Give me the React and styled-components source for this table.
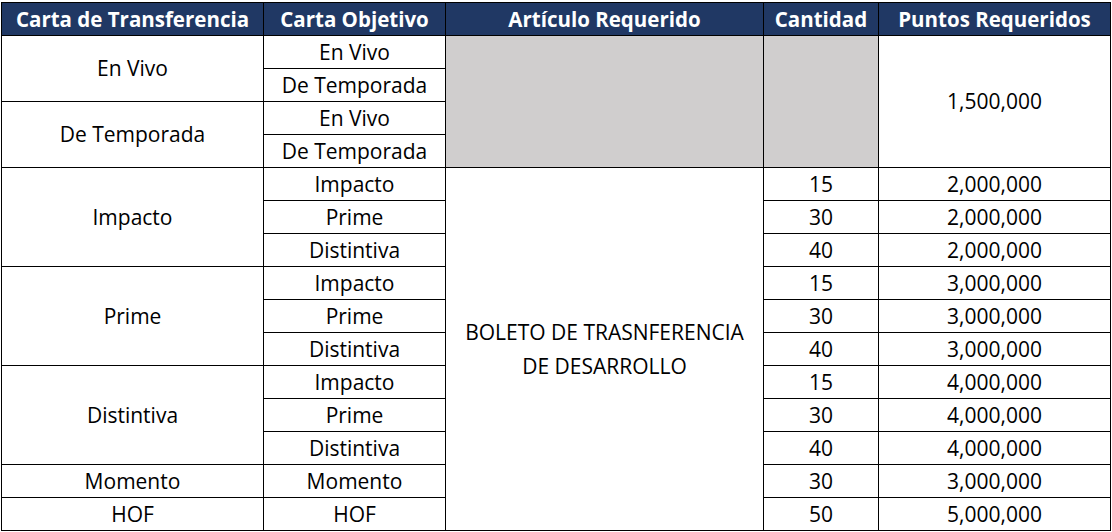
import React from 'react'
import styled, { createGlobalStyle } from 'styled-components'

const Global = createGlobalStyle`
  html, body {
    margin: 0;
    padding: 0;
    background: #ffffff;
  }
  body {
    font-family: 'Open Sans', 'Noto Sans CJK KR', sans-serif;
  }
`

const Page = styled.div`
  padding: 2px 0 0 1px;
`

const Table = styled.table`
  border-collapse: collapse;
  table-layout: fixed;
  width: 1109px;
  font-size: 21px;
  color: #000;
`

const Head = styled.th`
  background: #203864;
  color: #ffffff;
  font-weight: 700;
  font-size: 20.5px;
  height: 32px;
  padding: 0;
  border: 1px solid #000;
  text-align: center;
  white-space: nowrap;
  line-height: 32px;
`

const Row = styled.tr`
  height: 33px;
`

const Cell = styled.td`
  border: 1px solid #000;
  padding: 0;
  text-align: center;
  vertical-align: middle;
  line-height: ${p => (p.$tall ? '34px' : '31px')};
  white-space: nowrap;
  background: ${p => (p.$blank ? '#d0cece' : '#ffffff')};
`

const widths = [262, 182, 318, 115, 232]
const headers = ['Carta de Transferencia', 'Carta Objetivo', 'Artículo Requerido', 'Cantidad', 'Puntos Requeridos']

const tiers = [
  { name: 'Impacto', qty: ['15', '30', '40'], pts: '2,000,000' },
  { name: 'Prime', qty: ['15', '30', '40'], pts: '3,000,000' },
  { name: 'Distintiva', qty: ['15', '30', '40'], pts: '4,000,000' },
]
const targets = ['Impacto', 'Prime', 'Distintiva']

export default function App() {
  return (
    <Page>
      <Global />
      <Table>
        <colgroup>
          {widths.map((w, i) => (
            <col key={i} style={{ width: w }} />
          ))}
        </colgroup>
        <thead>
          <tr>
            {headers.map(h => (
              <Head key={h}>{h}</Head>
            ))}
          </tr>
        </thead>
        <tbody>
          <Row>
            <Cell rowSpan={2}>En Vivo</Cell>
            <Cell>En Vivo</Cell>
            <Cell rowSpan={4} $blank />
            <Cell rowSpan={4} $blank />
            <Cell rowSpan={4}>1,500,000</Cell>
          </Row>
          <Row>
            <Cell>De Temporada</Cell>
          </Row>
          <Row>
            <Cell rowSpan={2}>De Temporada</Cell>
            <Cell>En Vivo</Cell>
          </Row>
          <Row>
            <Cell>De Temporada</Cell>
          </Row>
          {tiers.map((t, ti) =>
            targets.map((target, i) => (
              <Row key={t.name + target}>
                {i === 0 && <Cell rowSpan={3}>{t.name}</Cell>}
                <Cell>{target}</Cell>
                {ti === 0 && i === 0 && (
                  <Cell rowSpan={11} $tall>
                    BOLETO DE TRASNFERENCIA
                    <br />
                    DE DESARROLLO
                  </Cell>
                )}
                <Cell>{t.qty[i]}</Cell>
                <Cell>{t.pts}</Cell>
              </Row>
            ))
          )}
          <Row>
            <Cell>Momento</Cell>
            <Cell>Momento</Cell>
            <Cell>30</Cell>
            <Cell>3,000,000</Cell>
          </Row>
          <Row>
            <Cell>HOF</Cell>
            <Cell>HOF</Cell>
            <Cell>50</Cell>
            <Cell>5,000,000</Cell>
          </Row>
        </tbody>
      </Table>
    </Page>
  )
}
